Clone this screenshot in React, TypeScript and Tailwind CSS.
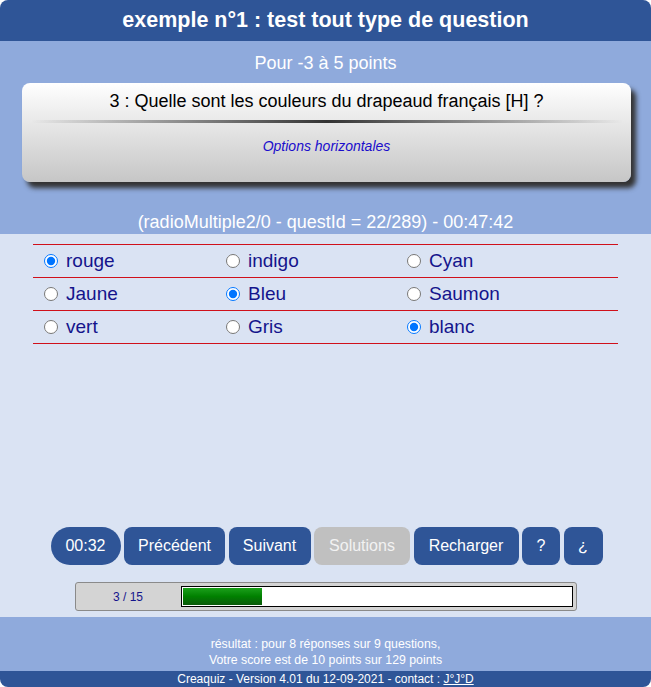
import React from "react";

const rows = [
  ["rouge", "indigo", "Cyan"],
  ["Jaune", "Bleu", "Saumon"],
  ["vert", "Gris", "blanc"],
];
const checked = [0, 1, 2];

function Btn({ children, w, pill, disabled }: any) {
  return (
    <div
      className={`flex h-[38px] items-center justify-center text-[16px] ${w} ${
        pill ? "rounded-full" : "rounded-lg"
      } ${disabled ? "bg-[#c0c0c0] text-[#f2f2f2]" : "bg-[#2f5597] text-white"}`}
    >
      {children}
    </div>
  );
}

export default function App() {
  return (
    <div className="w-[651px] h-[687px] bg-white font-['Liberation_Sans',Arial,sans-serif]">
      <div className="flex flex-col h-full rounded-lg overflow-hidden">
        <div className="h-[41px] bg-[#2f5597] flex items-center justify-center">
          <h1 className="text-white font-bold text-[21.5px]">
            exemple n°1 : test tout type de question
          </h1>
        </div>

        <div className="bg-[#8faadc] pt-3 pb-[2px] flex flex-col items-center">
          <p className="text-white text-[18px] leading-5">Pour -3 à 5 points</p>
          <div className="mt-[10px] ml-[2px] w-[609px] h-[99px] rounded-lg bg-gradient-to-b from-white to-[#c6c6c6] shadow-[5px_6px_5px_#333] pt-[8px] flex flex-col items-center">
            <p className="text-black text-[18px] leading-5">
              3 : Quelle sont les couleurs du drapeaud français [H] ?
            </p>
            <div className="mt-[9px] h-[3px] w-[592px] bg-gradient-to-r from-transparent via-[#333] to-transparent" />
            <p className="mt-[13px] text-[#1a0dcc] italic text-[14px]">Options horizontales</p>
          </div>
          <p className="mt-[30px] text-white text-[18px] leading-5">
            (radioMultiple2/0 - questId = 22/289) - 00:47:42
          </p>
        </div>

        <div className="flex-1 bg-[#dae3f3] flex flex-col items-center">
          <div className="mt-[10px] w-[585px] h-px bg-[#d0101a]" />
          <div className="w-[585px]">
            {rows.map((r, i) => (
              <div key={i}>
                <div className="grid grid-cols-[182px_181px_1fr] pl-[11px] h-[32px] items-center">
                  {r.map((label, j) => (
                    <label key={label} className="flex items-center text-[19px] text-[#14148c]">
                      <input
                        type="radio"
                        name={`row${i}`}
                        defaultChecked={checked[i] === j}
                        className="m-0 mr-[8px] w-[14px] h-[14px]"
                      />
                      {label}
                    </label>
                  ))}
                </div>
                <div className="h-px bg-[#d0101a]" />
              </div>
            ))}
          </div>

          <div className="mt-[183px] ml-[2px] flex gap-[3.5px]">
            <Btn w="w-[70px]" pill>
              00:32
            </Btn>
            <Btn w="w-[101px]">Précédent</Btn>
            <Btn w="w-[82px]">Suivant</Btn>
            <Btn w="w-[96px]" disabled>
              Solutions
            </Btn>
            <Btn w="w-[105px]">Recharger</Btn>
            <Btn w="w-[38px]">?</Btn>
            <Btn w="w-[39px]">¿</Btn>
          </div>

          <div className="mt-[17px] w-[502px] h-[29px] bg-[#d4d4d4] border border-[#8a8a8a] rounded-[3px] flex items-center pr-[3px]">
            <div className="w-[105px] text-center text-[12px] text-[#14148c]">3 / 15</div>
            <div className="flex-1 h-[21px] bg-white border border-black p-[1px]">
              <div className="h-full w-[79px] bg-gradient-to-b from-[#1aa01a] via-[#008000] to-[#0a5a0a]" />
            </div>
          </div>
          <div className="h-[6px]" />
        </div>

        <div className="bg-[#8faadc] h-[54px] pt-[19px] text-center text-white text-[12.3px] leading-4">
          <p>résultat : pour 8 réponses sur 9 questions,</p>
          <p>Votre score est de 10 points sur 129 points</p>
        </div>
        <div className="bg-[#2f5597] h-[16px] flex items-center justify-center text-white text-[12px] leading-4">
          Creaquiz - Version 4.01 du 12-09-2021 - contact :&nbsp;
          <a href="#" className="underline">
            J°J°D
          </a>
        </div>
      </div>
    </div>
  );
}
